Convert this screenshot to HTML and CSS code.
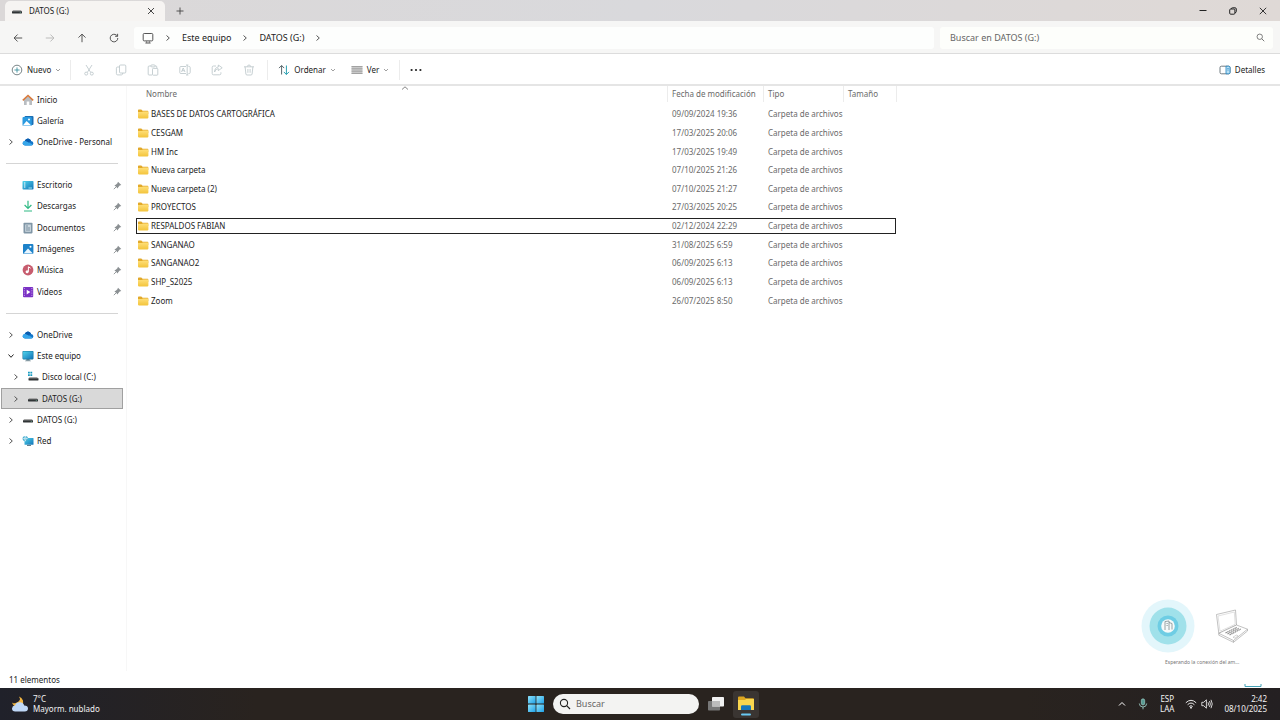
FILE: index.html
```html
<!DOCTYPE html>
<html lang="es">
<head>
    <meta charset="UTF-8">
    <meta name="viewport" content="width=device-width, initial-scale=1.0">
    <title>DATOS (G:)</title>
    <link rel="stylesheet" href="styles.css">
</head>
<body>

    <!-- Shared icons -->
    <svg class="sprite" aria-hidden="true">
        <defs>
            <linearGradient id="folderFill" x1="0" y1="0" x2="0" y2="1">
                <stop offset="0" stop-color="#ffe07a"/>
                <stop offset="1" stop-color="#f3c43c"/>
            </linearGradient>
            <linearGradient id="blueFill" x1="0" y1="0" x2="1" y2="1">
                <stop offset="0" stop-color="#4fd3ea"/>
                <stop offset="1" stop-color="#1273b8"/>
            </linearGradient>
            <linearGradient id="winFill" x1="0" y1="0" x2="1" y2="1">
                <stop offset="0" stop-color="#8fe3fb"/>
                <stop offset="1" stop-color="#1ea0e6"/>
            </linearGradient>
        </defs>
        <symbol id="folder" viewBox="0 0 12 10">
            <path d="M1 1.2Q1 .5 1.7.5H4.3L5.6 1.7H10.6Q11.3 1.7 11.3 2.4V5H1Z" fill="#e2a92a"/>
            <path d="M1 3H5L6 2.4H10.6Q11.4 2.4 11.4 3.2V8.6Q11.4 9.4 10.6 9.4H1.8Q1 9.4 1 8.6Z" fill="url(#folderFill)"/>
        </symbol>
        <symbol id="chevron" viewBox="0 0 6 8">
            <path d="M1.5 1.5L4.3 4L1.5 6.5" fill="none" stroke="currentColor" stroke-width="1"/>
        </symbol>
        <symbol id="down" viewBox="0 0 6 4">
            <path d="M1 1L3 3L5 1" fill="none" stroke="currentColor" stroke-width=".7"/>
        </symbol>
        <symbol id="pin" viewBox="0 0 9 9">
            <path d="M5 .7L8.3 4L6.7 4.6L5.2 6.2L4.8 7.6L1.4 4.2L2.8 3.8L4.4 2.3Z" fill="#8b9093"/>
            <path d="M3.2 5.8L.8 8.2" stroke="#8b9093" stroke-width=".9"/>
        </symbol>
        <symbol id="cloud" viewBox="0 0 12 12">
            <path d="M3 9.5Q.6 9.4.6 7.3Q.7 5.3 2.7 5Q3.6 2.5 6 2.5Q8.4 2.6 9.1 5Q11.4 5.2 11.4 7.3Q11.3 9.5 9.2 9.5Z" fill="#1475c8"/>
            <path d="M2.7 5Q4.2 4.6 5.5 5.8L10.8 8.6Q10 9.5 9.2 9.5H3Q.6 9.4.6 7.3Q.7 5.3 2.7 5Z" fill="#36a6ea"/>
            <path d="M2.7 5Q3.6 2.5 6 2.5Q8.4 2.6 9.1 5Q7.7 4.9 6.6 6.5Q4.6 4.5 2.7 5Z" fill="#0a5cae"/>
        </symbol>
        <symbol id="drive" viewBox="0 0 12 12">
            <path d="M2.2 5H9.8L11 6.5H1Z" fill="#a8a8a8"/>
            <rect x="1" y="6.2" width="10" height="2.2" rx=".4" fill="#303436"/>
            <rect x="8.8" y="7" width="1" height=".6" fill="#74c9a8"/>
        </symbol>
        <symbol id="pc" viewBox="0 0 12 12">
            <path d="M4.5 9H7.5L8 11H4Z" fill="#6d8793"/>
            <rect x="3" y="10.5" width="6" height=".8" fill="#9cabb2"/>
            <rect x=".5" y="1" width="11" height="8.4" rx=".8" fill="#14789e"/>
            <rect x="1.1" y="1.6" width="9.8" height="7.2" rx=".3" fill="url(#blueFill)"/>
        </symbol>
        <symbol id="search" viewBox="0 0 12 12">
            <circle cx="5" cy="5" r="3.6" fill="none" stroke="currentColor" stroke-width="1.1"/>
            <path d="M7.7 7.7L11 11" stroke="currentColor" stroke-width="1.2"/>
        </symbol>
    </svg>

    <!-- Window title bar -->
    <header class="titlebar">
        <div class="tab">
            <svg class="icon12"><use href="#drive"/></svg>
            <span class="tab-name">DATOS (G:)</span>
            <button class="plain" aria-label="Cerrar pestaña">
                <svg width="8" height="8" viewBox="0 0 8 8"><path d="M1 1L7 7M7 1L1 7" stroke="#333" stroke-width=".9"/></svg>
            </button>
        </div>
        <button class="plain new-tab" aria-label="Nueva pestaña">
            <svg width="8" height="8" viewBox="0 0 8 8"><path d="M4 .5V7.5M.5 4H7.5" stroke="#444" stroke-width=".9"/></svg>
        </button>
        <div class="window-buttons">
            <button class="plain" aria-label="Minimizar">
                <svg width="8" height="8" viewBox="0 0 8 8"><path d="M.5 3.5H7.5" stroke="#222"/></svg>
            </button>
            <button class="plain" aria-label="Restaurar">
                <svg width="8" height="8" viewBox="0 0 8 8"><g fill="none" stroke="#222"><rect x=".7" y="2" width="5.2" height="5.2" rx="1"/><path d="M2.3 1.9Q2.3.8 3.4.8H6Q7.3.8 7.3 2V4.5Q7.3 5.6 6.1 5.7"/></g></svg>
            </button>
            <button class="plain" aria-label="Cerrar">
                <svg width="8" height="8" viewBox="0 0 8 8"><path d="M.8.8L7.2 7.2M7.2.8L.8 7.2" stroke="#222" stroke-width=".9"/></svg>
            </button>
        </div>
    </header>

    <!-- Navigation and address -->
    <div class="navbar">
        <div class="nav-buttons">
            <button class="plain" aria-label="Atrás">
                <svg width="10" height="10" viewBox="0 0 10 10"><path d="M9.2 5H1.2M4.6 1.5L1.1 5L4.6 8.5" fill="none" stroke="#444" stroke-width=".9"/></svg>
            </button>
            <button class="plain" aria-label="Adelante" disabled>
                <svg width="10" height="10" viewBox="0 0 10 10"><path d="M.8 5H8.8M5.4 1.5L8.9 5L5.4 8.5" fill="none" stroke="#b5b5b5" stroke-width=".9"/></svg>
            </button>
            <button class="plain" aria-label="Subir">
                <svg width="10" height="10" viewBox="0 0 10 10"><path d="M5 9.2V1.2M1.5 4.6L5 1.1L8.5 4.6" fill="none" stroke="#444" stroke-width=".9"/></svg>
            </button>
            <button class="plain" aria-label="Actualizar">
                <svg width="10" height="10" viewBox="0 0 10 10"><path d="M8.8 5A3.8 3.8 0 1 1 7.5 2.2L8.5 3.1M8.6.8V3.3H6.1" fill="none" stroke="#444" stroke-width=".9"/></svg>
            </button>
        </div>
        <nav class="address">
            <svg class="icon12" viewBox="0 0 12 12"><rect x="1.2" y="1.5" width="9.6" height="7.4" rx="1" fill="none" stroke="#555"/><path d="M3.4 11H8.6" stroke="#555"/><path d="M4.6 9V11M7.4 9V11" stroke="#555" stroke-width=".6"/></svg>
            <svg class="chev"><use href="#chevron"/></svg>
            <a href="#">Este equipo</a>
            <svg class="chev"><use href="#chevron"/></svg>
            <a href="#">DATOS (G:)</a>
            <svg class="chev"><use href="#chevron"/></svg>
        </nav>
        <label class="search-box">
            <input type="text" placeholder="Buscar en DATOS (G:)" aria-label="Buscar en DATOS (G:)">
            <svg width="9" height="9"><use href="#search"/></svg>
        </label>
    </div>

    <!-- Command bar -->
    <div class="toolbar">
        <button class="command">
            <svg width="12" height="12" viewBox="0 0 12 12"><circle cx="6" cy="6" r="4.8" fill="none" stroke="#58666a" stroke-width=".8"/><path d="M6 3.4V8.6M3.4 6H8.6" stroke="#2a8794" stroke-width=".8"/></svg>
            <span>Nuevo</span>
            <svg class="down"><use href="#down"/></svg>
        </button>
        <div class="file-actions">
            <button class="plain" aria-label="Cortar" disabled>
                <svg width="12" height="12" viewBox="0 0 12 12"><path d="M3 1L7.7 8.4M9 1L4.3 8.4"/><circle cx="3.2" cy="9.6" r="1.5"/><circle cx="8.8" cy="9.6" r="1.5"/></svg>
            </button>
            <button class="plain" aria-label="Copiar" disabled>
                <svg width="12" height="12" viewBox="0 0 12 12"><rect x="4.5" y="1" width="6.3" height="8" rx="1"/><path d="M4.5 3H2.6Q1.4 3 1.4 4.2V9.6Q1.4 10.9 2.7 10.9H6.5Q7.6 10.9 7.8 9"/></svg>
            </button>
            <button class="plain" aria-label="Pegar" disabled>
                <svg width="12" height="12" viewBox="0 0 12 12"><path d="M4 2H2Q1.2 2 1.2 3V10.2Q1.2 11 2 11H5M8 2H9Q9.8 2 9.8 3V4.2"/><rect x="4" y=".9" width="4" height="2" rx=".8"/><rect x="5.5" y="4.4" width="5.3" height="6.8" rx=".8"/></svg>
            </button>
            <button class="plain" aria-label="Cambiar nombre" disabled>
                <svg width="12" height="12" viewBox="0 0 12 12"><path d="M7 2.5H1.8Q.8 2.5.8 3.5V8.5Q.8 9.5 1.8 9.5H7M9.4 2.5H10.2Q11.2 2.5 11.2 3.5V8.5Q11.2 9.5 10.2 9.5H9.4M8.2 1V11M7 1H9.4M7 11H9.4M2.5 8L4.2 4L6 8M3.1 6.7H5.4"/></svg>
            </button>
            <button class="plain" aria-label="Compartir" disabled>
                <svg width="12" height="12" viewBox="0 0 12 12"><path d="M5 2H2.5Q1.2 2 1.2 3.3V9.5Q1.2 10.8 2.5 10.8H8.6Q9.9 10.8 9.9 9.5V8.3M3.6 8Q4.2 4.8 7.3 4.6V6.6L11.2 3.8L7.3 1V3Q3.7 3.4 3.6 8Z"/></svg>
            </button>
            <button class="plain" aria-label="Eliminar" disabled>
                <svg width="12" height="12" viewBox="0 0 12 12"><path d="M1 2.8H11M4.3 2.6Q4.5 1 6 1Q7.5 1 7.7 2.6M2.1 2.8L2.9 10Q3 11 4 11H8Q9 11 9.1 10L9.9 2.8M4.9 5V8.8M7.1 5V8.8"/></svg>
            </button>
        </div>
        <div class="view-actions">
            <button class="command">
                <svg width="12" height="12" viewBox="0 0 12 12"><g fill="none"><path d="M3.6 10.5V1.5M1 4.1L3.6 1.5L6.2 4.1" stroke="#58666a"/><path d="M8.4 1.5V10.5M5.8 7.9L8.4 10.5L11 7.9" stroke="#2a9fb0"/></g></svg>
                <span>Ordenar</span>
                <svg class="down"><use href="#down"/></svg>
            </button>
            <button class="command">
                <svg width="12" height="12" viewBox="0 0 12 12"><rect x=".5" y="2" width="11" height="8" fill="#c9c9c9"/><path d="M.5 2.5H11.5M.5 4.8H11.5M.5 7.2H11.5M.5 9.5H11.5" stroke="#888" stroke-width=".6"/></svg>
                <span>Ver</span>
                <svg class="down"><use href="#down"/></svg>
            </button>
        </div>
        <button class="plain more" aria-label="Ver más">
            <svg width="12" height="4" viewBox="0 0 12 4" fill="#222"><circle cx="1.6" cy="2" r="1.1"/><circle cx="6" cy="2" r="1.1"/><circle cx="10.4" cy="2" r="1.1"/></svg>
        </button>
        <button class="command details">
            <svg width="12" height="12" viewBox="0 0 12 12"><rect x="1" y="2.2" width="10" height="7.6" rx="1.4" fill="#fff" stroke="#4d5b63" stroke-width=".8"/><path d="M7 2.2H9.8Q11 2.2 11 3.6V8.4Q11 9.8 9.8 9.8H7Z" fill="#b9e0f5" stroke="#1d81bf" stroke-width=".8"/><path d="M8.2 4.5H9.8M8.2 6H9.8" stroke="#1d81bf" stroke-width=".6"/></svg>
            <span>Detalles</span>
        </button>
    </div>

    <main class="explorer">
        <!-- Folder tree -->
        <nav class="sidebar">
            <ul class="tree">
                <li><a href="#">
                    <svg class="icon12 lead" viewBox="0 0 12 12"><path d="M2 5.5L6 2L10 5.5V11H7.3V7.5H4.7V11H2Z" fill="#b9bdc1"/><path d="M.8 6.4L6 1.5L11.2 6.4" fill="none" stroke="#d9793a" stroke-width="1.5"/></svg>
                    <span>Inicio</span></a></li>
                <li><a href="#">
                    <svg class="icon12 lead" viewBox="0 0 12 12"><rect x="2.5" y="1" width="9" height="9" rx="1" fill="#1b6fb5"/><rect x=".5" y="2" width="9.3" height="9" rx="1" fill="#2a9ae0"/><path d="M.8 10.6L4.6 6L9.3 10.6Z" fill="#fff"/><circle cx="7" cy="4.6" r="1" fill="#fff"/></svg>
                    <span>Galería</span></a></li>
                <li><a href="#">
                    <svg class="chev"><use href="#chevron"/></svg>
                    <svg class="icon12"><use href="#cloud"/></svg>
                    <span>OneDrive - Personal</span></a></li>
                <li class="separator"></li>
                <li><a href="#">
                    <svg class="icon12 lead" viewBox="0 0 12 12"><rect x=".5" y="2" width="11" height="8.5" rx=".8" fill="url(#blueFill)"/><path d="M2 4H3.4M2 6H3.4M2 8H3.4" stroke="#fff"/><path d="M6.5 9H10" stroke="#9be6ef"/></svg>
                    <span>Escritorio</span>
                    <svg class="pin"><use href="#pin"/></svg></a></li>
                <li><a href="#">
                    <svg class="icon12 lead" viewBox="0 0 12 12"><path d="M6 .8V8.3M2.6 5L6 8.4L9.4 5M2 11H10" fill="none" stroke="#2fba84" stroke-width="1.2"/></svg>
                    <span>Descargas</span>
                    <svg class="pin"><use href="#pin"/></svg></a></li>
                <li><a href="#">
                    <svg class="icon12 lead" viewBox="0 0 12 12"><rect x="1.5" y=".8" width="9" height="10.6" rx=".8" fill="#8096a6"/><rect x="3.2" y="2.5" width="5.7" height="7.3" fill="#cbd7df"/><path d="M4 4H6M4 6H8M4 8H8" stroke="#587185" stroke-width=".7"/></svg>
                    <span>Documentos</span>
                    <svg class="pin"><use href="#pin"/></svg></a></li>
                <li><a href="#">
                    <svg class="icon12 lead" viewBox="0 0 12 12"><rect x="1" y="1" width="10.4" height="10" rx="1" fill="#1d82c9"/><path d="M1.5 10.6L6 5.6L10.9 10.6Z" fill="#e9f6ff"/><circle cx="8.5" cy="3.8" r="1" fill="#fff"/></svg>
                    <span>Imágenes</span>
                    <svg class="pin"><use href="#pin"/></svg></a></li>
                <li><a href="#">
                    <svg class="icon12 lead" viewBox="0 0 12 12"><circle cx="6" cy="6" r="5.4" fill="#c75c6e"/><path d="M6.4 7.8V2.8L8.6 4.2" fill="none" stroke="#fff"/><circle cx="5.1" cy="7.8" r="1.5" fill="#fff"/></svg>
                    <span>Música</span>
                    <svg class="pin"><use href="#pin"/></svg></a></li>
                <li><a href="#">
                    <svg class="icon12 lead" viewBox="0 0 12 12"><rect x="1" y="1" width="10.2" height="10.2" rx="1" fill="#7a32c4"/><path d="M2.3 2V10.5M9.9 2V10.5" stroke="#d5b3f3" stroke-width=".9" stroke-dasharray="1 1.3"/><path d="M4.7 3.8L8.4 6.1L4.7 8.4Z" fill="#fff"/></svg>
                    <span>Videos</span>
                    <svg class="pin"><use href="#pin"/></svg></a></li>
                <li class="separator"></li>
                <li><a href="#">
                    <svg class="chev"><use href="#chevron"/></svg>
                    <svg class="icon12"><use href="#cloud"/></svg>
                    <span>OneDrive</span></a></li>
                <li><a href="#">
                    <svg class="chev open"><use href="#chevron"/></svg>
                    <svg class="icon12"><use href="#pc"/></svg>
                    <span>Este equipo</span></a></li>
                <li class="child"><a href="#">
                    <svg class="chev"><use href="#chevron"/></svg>
                    <svg class="icon12" viewBox="0 0 12 12"><path d="M2.5 6H10L11.3 7.5H1.5Z" fill="#a8a8a8"/><rect x="1.5" y="7.2" width="10" height="2.2" rx=".4" fill="#303436"/><path d="M1 .8H2.8V2.6H1ZM3.4.8H5.2V2.6H3.4ZM1 3.2H2.8V5H1ZM3.4 3.2H5.2V5H3.4Z" fill="#159ac0"/></svg>
                    <span>Disco local (C:)</span></a></li>
                <li class="child"><a href="#" class="current">
                    <svg class="chev"><use href="#chevron"/></svg>
                    <svg class="icon12"><use href="#drive"/></svg>
                    <span>DATOS (G:)</span></a></li>
                <li><a href="#">
                    <svg class="chev"><use href="#chevron"/></svg>
                    <svg class="icon12"><use href="#drive"/></svg>
                    <span>DATOS (G:)</span></a></li>
                <li><a href="#">
                    <svg class="chev"><use href="#chevron"/></svg>
                    <svg class="icon12" viewBox="0 0 12 12"><rect x="2.5" y="3" width="9" height="6.8" rx=".6" fill="url(#blueFill)"/><rect x="5" y="9.8" width="4" height="1.2" fill="#64808f"/><circle cx="3.3" cy="3.6" r="2.7" fill="#4aaed0"/><path d="M.7 3.6H5.9M3.3 1Q1.6 3.6 3.3 6.2Q5 3.6 3.3 1" fill="none" stroke="#e5f7fc" stroke-width=".6"/></svg>
                    <span>Red</span></a></li>
            </ul>
        </nav>

        <!-- File list -->
        <section class="content">
            <svg class="sort-mark" viewBox="0 0 8 4"><path d="M1 3.5L4 .8L7 3.5" fill="none" stroke="#666" stroke-width=".8"/></svg>
            <table class="files">
                <thead>
                    <tr>
                        <th class="col-name"><span>Nombre</span></th>
                        <th class="col-date"><span>Fecha de modificación</span></th>
                        <th class="col-type"><span>Tipo</span></th>
                        <th class="col-size"><span>Tamaño</span></th>
                    </tr>
                </thead>
                <tbody>
                    <tr><td><svg class="folder"><use href="#folder"/></svg>BASES DE DATOS CARTOGRÁFICA</td><td>09/09/2024 19:36</td><td>Carpeta de archivos</td><td></td></tr>
                    <tr><td><svg class="folder"><use href="#folder"/></svg>CESGAM</td><td>17/03/2025 20:06</td><td>Carpeta de archivos</td><td></td></tr>
                    <tr><td><svg class="folder"><use href="#folder"/></svg>HM Inc</td><td>17/03/2025 19:49</td><td>Carpeta de archivos</td><td></td></tr>
                    <tr><td><svg class="folder"><use href="#folder"/></svg>Nueva carpeta</td><td>07/10/2025 21:26</td><td>Carpeta de archivos</td><td></td></tr>
                    <tr><td><svg class="folder"><use href="#folder"/></svg>Nueva carpeta (2)</td><td>07/10/2025 21:27</td><td>Carpeta de archivos</td><td></td></tr>
                    <tr><td><svg class="folder"><use href="#folder"/></svg>PROYECTOS</td><td>27/03/2025 20:25</td><td>Carpeta de archivos</td><td></td></tr>
                    <tr class="focused"><td><svg class="folder"><use href="#folder"/></svg>RESPALDOS FABIAN</td><td>02/12/2024 22:29</td><td>Carpeta de archivos</td><td></td></tr>
                    <tr><td><svg class="folder"><use href="#folder"/></svg>SANGANAO</td><td>31/08/2025 6:59</td><td>Carpeta de archivos</td><td></td></tr>
                    <tr><td><svg class="folder"><use href="#folder"/></svg>SANGANAO2</td><td>06/09/2025 6:13</td><td>Carpeta de archivos</td><td></td></tr>
                    <tr><td><svg class="folder"><use href="#folder"/></svg>SHP_S2025</td><td>06/09/2025 6:13</td><td>Carpeta de archivos</td><td></td></tr>
                    <tr><td><svg class="folder"><use href="#folder"/></svg>Zoom</td><td>26/07/2025 8:50</td><td>Carpeta de archivos</td><td></td></tr>
                </tbody>
            </table>
        </section>

        <!-- Connection popup over the window -->
        <aside class="connection">
            <div class="connection-art">
                <svg width="54" height="54" viewBox="0 0 54 54">
                    <circle cx="27" cy="27" r="26.5" fill="#e3f6fb"/>
                    <circle cx="27" cy="27" r="18.5" fill="#a0e1ea"/>
                    <circle cx="27" cy="27" r="10.5" fill="#6ecde4"/>
                    <circle cx="27" cy="27" r="6.8" fill="#f5fafa"/>
                    <path d="M24 31V22.5L28 22V31M28 23.5L31 24.5V30.5" fill="none" stroke="#7f8c8e" stroke-width=".8"/>
                    <path d="M25.3 24.5H27M25.3 26.5H27" stroke="#7f8c8e" stroke-width=".6"/>
                </svg>
                <svg width="34" height="34" viewBox="0 0 34 34">
                    <g fill="#fff" stroke="#999" stroke-width=".6" stroke-linejoin="round">
                        <path d="M1.5 5.5L20.5 1L21.5 16L3.8 24.3Z"/>
                        <path d="M3 7L19.3 3L20.2 15.3L5 22.2Z" stroke="#ccc"/>
                        <path d="M3.8 24.3L21.5 16L32.5 20.2L18.5 31.5Z"/>
                        <path d="M3.8 24.3V26.2L18.5 33.3L32.5 22V20.2M18.5 31.5V33.3" fill="none"/>
                    </g>
                    <path d="M10.5 24L21.8 18.4M12.5 25L23.8 19.2M14.5 26L25.8 20" stroke="#888" stroke-width="1.2" stroke-dasharray="1.5 .5"/>
                    <path d="M18 28.2L21.3 26.1L23.1 26.8L20 29.2Z" fill="none" stroke="#aaa" stroke-width=".5"/>
                </svg>
            </div>
            <p>Esperando la conexión del am...</p>
        </aside>
    </main>

    <footer class="status">
        <span>11 elementos</span>
        <svg width="18" height="4" viewBox="0 0 18 4"><path d="M1 0V2.5H17V0" fill="none" stroke="#45a2b7"/></svg>
    </footer>

    <!-- Taskbar -->
    <div class="taskbar">
        <button class="weather">
            <svg width="18" height="18" viewBox="0 0 18 18">
                <path d="M8 1.5Q10.8 5.8 4.8 8Q2.8 8.7 1 7.4Q2.4 12 7.5 11.6Q13 10.3 12 5.4Q10.8 2.4 8 1.5Z" fill="#f2b643"/>
                <path d="M4.2 16.5Q1 16.3 1 13.4Q1.3 10.8 4 10.6Q5 7.3 8.8 7.3Q12.2 7.3 13.2 10.5Q17 10.6 17 13.5Q16.9 16.3 13.7 16.5Z" fill="#bfd8f7"/>
            </svg>
            <span>7°C<br>Mayorm. nublado</span>
        </button>
        <div class="apps">
            <button class="plain" aria-label="Inicio">
                <svg width="18" height="18" viewBox="0 0 18 18" fill="url(#winFill)"><rect x="1" y="1" width="7.6" height="7.6" rx=".6"/><rect x="9.4" y="1" width="7.6" height="7.6" rx=".6"/><rect x="1" y="9.4" width="7.6" height="7.6" rx=".6"/><rect x="9.4" y="9.4" width="7.6" height="7.6" rx=".6"/></svg>
            </button>
            <label class="task-search">
                <svg width="12" height="12"><use href="#search"/></svg>
                <input type="text" placeholder="Buscar" aria-label="Buscar">
            </label>
            <button class="plain" aria-label="Vista de tareas">
                <svg width="18" height="18" viewBox="0 0 18 18"><rect x="1" y="6" width="12" height="9.5" rx=".8" fill="#777"/><rect x="5" y="2" width="12" height="9.5" rx=".8" fill="#f1f1f1"/><rect x="5" y="6" width="8" height="5.5" fill="#bcbcbc"/></svg>
            </button>
            <button class="plain running" aria-label="Explorador de archivos">
                <svg width="18" height="24" viewBox="0 0 18 24"><path d="M1 5.5Q1 4.5 2 4.5H7L8.5 6.3H16Q17 6.3 17 7.3V11H1Z" fill="#dca620"/><path d="M1 8H8L9 7H17V18H1Z" fill="#f9d64e"/><path d="M4 18V14.5Q4 13.3 5.2 13.3H12.8Q14 13.3 14 14.5V18Z" fill="#1777bb"/><rect x="4" y="21.5" width="10" height="2" rx="1" fill="#69c9f3"/></svg>
            </button>
        </div>
        <div class="tray">
            <button class="plain" aria-label="Mostrar iconos ocultos">
                <svg width="8" height="8" viewBox="0 0 8 8"><path d="M1 5.5L4 2.5L7 5.5" fill="none" stroke="#fff"/></svg>
            </button>
            <svg width="12" height="12" viewBox="0 0 12 12"><rect x="4.3" y=".8" width="3.4" height="6.2" rx="1.7" fill="#5a9c94" stroke="#a8dcd3" stroke-width=".6"/><path d="M2.3 5.5Q2.5 9 6 9Q9.5 9 9.7 5.5M6 9V11.3" fill="none" stroke="#a8dcd3" stroke-width=".8"/></svg>
            <span class="language">ESP<br>LAA</span>
            <div class="net">
                <svg width="12" height="12" viewBox="0 0 12 12"><g fill="none" stroke="#fff" stroke-width=".9"><path d="M.8 4.8Q6-.2 11.2 4.8M2.6 6.7Q6 3.4 9.4 6.7M4.3 8.5Q6 6.9 7.7 8.5"/></g><circle cx="6" cy="9.7" r=".9" fill="#fff"/></svg>
                <svg width="12" height="12" viewBox="0 0 12 12"><g fill="none" stroke="#fff" stroke-width=".8"><path d="M.8 4.3H2.7L5.4 1.8V10.2L2.7 7.7H.8ZM7 4.3Q8 6 7 7.7M8.5 3Q10.2 6 8.5 9M10 1.8Q12.5 6 10 10.2"/></g></svg>
            </div>
            <time class="clock">2:42<br>08/10/2025</time>
        </div>
    </div>

</body>
</html>
```
FILE: styles.css
```css
* {
    box-sizing: border-box;
}

body {
    margin: 0;
    min-height: 100vh;
    display: flex;
    flex-direction: column;
    font-family: "Noto Sans", "Open Sans", sans-serif;
    font-size: 8px;
    line-height: 12px;
    color: #222;
    background-color: #fff;
}

.sprite {
    position: absolute;
    width: 0;
    height: 0;
}

svg {
    display: block;
    flex-shrink: 0;
}

a {
    color: inherit;
    text-decoration: none;
}

button, input {
    font: inherit;
    color: inherit;
    border: none;
    background: none;
    padding: 0;
    margin: 0;
}

.plain {
    display: flex;
    align-items: center;
    justify-content: center;
}

.icon12 {
    width: 12px;
    height: 12px;
}

.chev {
    width: 6px;
    height: 8px;
    color: #555;
}

.open {
    transform: rotate(90deg);
    color: #222;
}

.down {
    width: 6px;
    height: 4px;
    color: #777;
}

/* Title bar */
.titlebar {
    display: flex;
    align-items: center;
    height: 21px;
    background: linear-gradient(90deg, #dbd8d8, #d9d9dc 50%, #dfd9d6);
}

.tab {
    display: flex;
    align-items: center;
    align-self: flex-end;
    gap: 6px;
    width: 160px;
    height: 20px;
    margin-left: 5px;
    padding: 0 10px 0 6px;
    border-radius: 5px 5px 0 0;
    background-color: #f6f4f2;
}

.tab-name {
    flex: 1;
}

.new-tab {
    margin-left: 11px;
}

.window-buttons {
    display: flex;
    gap: 22px;
    margin-left: auto;
    padding-right: 13px;
}

/* Address row */
.navbar {
    display: flex;
    align-items: center;
    gap: 6px;
    height: 33px;
    padding: 1px 7px 0 13px;
    border-bottom: 1px solid #dcdcdc;
    background-color: #f6f6f5;
    font-size: 9px;
}

.nav-buttons {
    display: flex;
    gap: 22px;
    margin-right: 9px;
}

.address {
    display: flex;
    align-items: center;
    flex: 1;
    gap: 11px;
    height: 22px;
    padding-left: 8px;
    border-radius: 3px;
    background-color: #fdfefd;
}

.search-box {
    display: flex;
    align-items: center;
    width: 26%;
    min-width: 333px;
    height: 22px;
    padding: 0 8px 0 10px;
    border-radius: 3px;
    background-color: #fdfefb;
    color: #666;
}

.search-box input {
    flex: 1;
    min-width: 0;
}

input::placeholder {
    color: #666;
    opacity: 1;
}

/* Command bar */
.toolbar {
    display: flex;
    align-items: center;
    height: 32px;
    padding: 2px 15px 0 11px;
    border-bottom: 2px solid #e5e5e5;
}

.command {
    display: flex;
    align-items: center;
    gap: 4px;
}

.file-actions {
    display: flex;
    align-items: center;
    gap: 20px;
    height: 20px;
    margin-left: 9px;
    padding: 0 12px;
    border-left: 1px solid #ececec;
    border-right: 1px solid #ececec;
}

.file-actions svg {
    fill: none;
    stroke: #b9c4c8;
    stroke-width: 0.8;
}

.view-actions {
    display: flex;
    align-items: center;
    gap: 15px;
    height: 20px;
    padding: 0 10px;
    border-right: 1px solid #ececec;
}

.more {
    margin-left: 10px;
}

.details {
    margin-left: auto;
}

/* Explorer body */
.explorer {
    position: relative;
    display: flex;
    flex: 1;
}

.sidebar {
    width: 127px;
    flex-shrink: 0;
    padding: 3px 3px 0 1px;
    border-right: 1px solid #f7f7f7;
}

.tree {
    display: grid;
    grid-auto-rows: 1fr;
    height: 363px;
    margin: 0;
    padding: 0;
    list-style: none;
}

.tree a {
    display: flex;
    align-items: center;
    gap: 3px;
    height: 100%;
    padding: 0 0 0 6px;
    border: 1px solid transparent;
}

.tree .chev {
    margin-right: 5px;
}

.tree .lead {
    margin-left: 14px;
}

.tree .child a {
    padding-left: 11px;
}

.tree .current {
    border-color: #a0a0a0;
    background-color: #d9d9d9;
}

.pin {
    width: 9px;
    height: 9px;
    margin-left: auto;
}

.separator {
    align-self: center;
    height: 1px;
    margin: 0 5px;
    background-color: #d5d5d5;
}

/* File list */
.content {
    position: relative;
    flex: 1;
    padding-left: 8px;
}

.sort-mark {
    position: absolute;
    top: 0;
    left: 274px;
    width: 8px;
    height: 4px;
}

.files {
    width: 762px;
    height: 224px;
    table-layout: fixed;
    border-collapse: separate;
    border-spacing: 0;
    color: #6a6a6a;
}

.files th {
    height: 19px;
    padding: 0;
    font-weight: normal;
    text-align: left;
    vertical-align: top;
}

.files th span {
    display: block;
    height: 16px;
    padding-left: 4px;
    border-right: 1px solid #ececec;
    line-height: 16px;
}

.col-name {
    width: 533px;
}

.files .col-name span {
    padding-left: 11px;
}

.col-date {
    width: 96px;
}

.col-type {
    width: 80px;
}

.col-size {
    width: 53px;
}

.files td {
    padding: 0 4px;
    white-space: nowrap;
}

.files td:first-child {
    padding-left: 2px;
    color: #1c1c1c;
}

.folder {
    display: inline-block;
    width: 12px;
    height: 10px;
    margin-right: 2px;
    vertical-align: -2px;
}

.focused {
    outline: 1px solid #222;
    outline-offset: -2px;
}

/* Connection popup */
.connection {
    position: absolute;
    right: 31px;
    bottom: 4px;
    width: 108px;
}

.connection-art {
    display: flex;
    align-items: center;
    justify-content: space-between;
}

.connection p {
    margin: 4px 0 0 24px;
    font-size: 5px;
    line-height: 10px;
    color: #777;
    white-space: nowrap;
}

.status {
    display: flex;
    align-items: flex-end;
    justify-content: space-between;
    height: 17px;
    padding: 0 18px 0 9px;
}

.status span {
    align-self: center;
}

/* Taskbar */
.taskbar {
    display: grid;
    grid-template-columns: 1fr auto 1fr;
    align-items: center;
    height: 32px;
    padding: 0 13px 0 11px;
    background: linear-gradient(90deg, #20212a, #29231f 20%, #29231f 80%, #242022);
    color: #f2f2f2;
    line-height: 10px;
}

.weather {
    display: flex;
    align-items: center;
    gap: 4px;
    text-align: left;
}

.apps {
    display: flex;
    align-items: center;
    gap: 8px;
    margin-left: 8px;
}

.task-search {
    display: flex;
    align-items: center;
    gap: 5px;
    width: 146px;
    height: 20px;
    padding: 0 6px;
    border-radius: 10px;
    background-color: #f3f3f2;
    color: #222;
    font-size: 9px;
}

.task-search input {
    flex: 1;
    min-width: 0;
}

.running {
    width: 26px;
    height: 27px;
    border-radius: 3px;
    background-color: #3a3532;
}

.tray {
    display: flex;
    align-items: center;
    justify-content: flex-end;
    gap: 11px;
}

.language {
    text-align: center;
}

.net {
    display: flex;
    gap: 4px;
}

.clock {
    text-align: right;
}
```
